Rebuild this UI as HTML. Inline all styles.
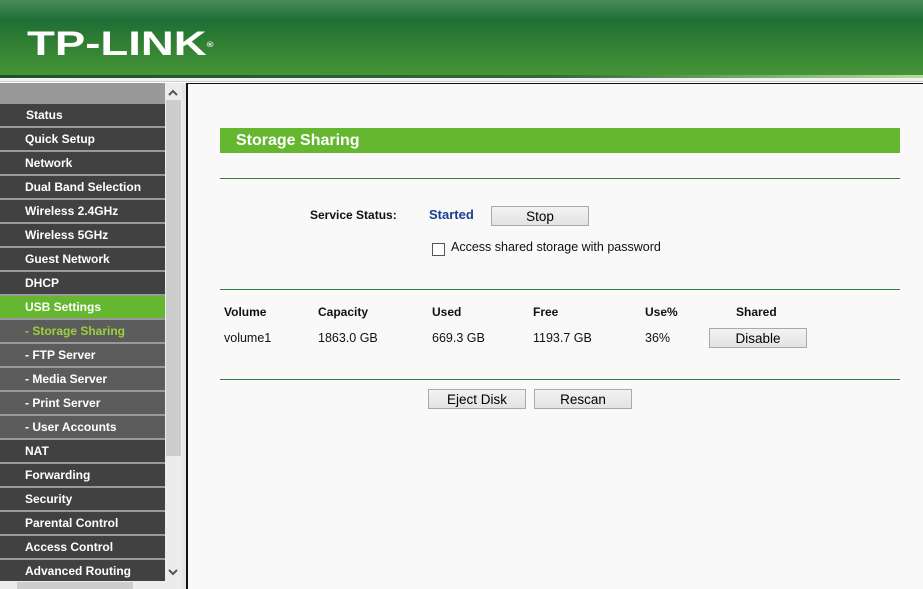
<!DOCTYPE html>
<html><head><meta charset="utf-8"><style>
*{margin:0;padding:0;box-sizing:border-box}
body{width:923px;height:589px;overflow:hidden;background:#fff;font-family:"Liberation Sans",Arial,sans-serif;position:relative}
.hdr{position:absolute;left:0;top:0;width:923px;height:75px;background:linear-gradient(#4a8a5a 0,#1e6e36 20px,#2e7d33 40px,#459436 75px)}
.logo{position:absolute;left:27px;top:24px;color:#fff;font-weight:bold;font-size:34px;letter-spacing:0px;transform:scaleX(1.34);transform-origin:left;line-height:40px}
.logo sup{font-size:7px;vertical-align:top;position:relative;top:2px}
.l1{position:absolute;left:0;top:75px;width:923px;height:3px;background:linear-gradient(90deg,#1f4f2c,#2e6a3a 60%,#b6dc9a)}
.l2{position:absolute;left:0;top:78px;width:923px;height:4px;background:#f0f0f0;border-bottom:1px solid #d0d0d0}
.side{position:absolute;left:0;top:83px;width:165px;height:498px;background:#999;overflow:hidden}
.it{position:absolute;left:0;width:165px;height:22px;background:#414141;color:#fff;font-weight:bold;font-size:12px;line-height:22px;padding-left:25px}
.sub{background:#5c5c5c}
.act{background:#64b72f}
.sel{color:#9ad23c}
.vs{position:absolute;left:165px;top:83px;width:17px;height:498px;background:#ececec}
.thumb{position:absolute;left:166px;top:100px;width:15px;height:356px;background:#cdcdcd}
.hs{position:absolute;left:0;top:581px;width:182px;height:8px;background:#ececec}
.hthumb{position:absolute;left:17px;top:582px;width:116px;height:7px;background:#cdcdcd}
.gap{position:absolute;left:182px;top:83px;width:4px;height:506px;background:#e6e6e6}
.vline{position:absolute;left:186px;top:83px;width:2px;height:506px;background:#111}
.main{position:absolute;left:188px;top:83px;width:735px;height:506px;background:#f9f9f9;border-top:1px solid #111}
.t{position:absolute;font-size:12.5px;color:#111;white-space:nowrap}
.b{font-weight:bold;font-size:12px}
.bar{position:absolute;left:220px;top:128px;width:680px;height:25px;background:#64b72f;color:#fff;font-weight:bold;font-size:16px;line-height:25px;padding-left:16px}
.hl{position:absolute;left:220px;width:680px;height:1px;background:#2e7d46}
.btn{position:absolute;height:20px;background:linear-gradient(#f2f2f2,#e3e3e3);border:1px solid #a9a9a9;font-size:13.5px;text-align:center;line-height:19px;color:#000}
.cb{position:absolute;left:432px;top:243px;width:13px;height:13px;border:1px solid #555;background:#fff}
</style></head><body>
<div class="hdr"><div class="logo">TP-LINK<sup>®</sup></div></div>
<div class="l1"></div><div class="l2"></div>
<div class="side">
<div class="it" style="top:21px;padding-left:26px">Status</div>
<div class="it" style="top:45px">Quick Setup</div>
<div class="it" style="top:69px">Network</div>
<div class="it" style="top:93px">Dual Band Selection</div>
<div class="it" style="top:117px">Wireless 2.4GHz</div>
<div class="it" style="top:141px">Wireless 5GHz</div>
<div class="it" style="top:165px">Guest Network</div>
<div class="it" style="top:189px">DHCP</div>
<div class="it act" style="top:213px">USB Settings</div>
<div class="it sub sel" style="top:237px">- Storage Sharing</div>
<div class="it sub" style="top:261px">- FTP Server</div>
<div class="it sub" style="top:285px">- Media Server</div>
<div class="it sub" style="top:309px">- Print Server</div>
<div class="it sub" style="top:333px">- User Accounts</div>
<div class="it" style="top:357px">NAT</div>
<div class="it" style="top:381px">Forwarding</div>
<div class="it" style="top:405px">Security</div>
<div class="it" style="top:429px">Parental Control</div>
<div class="it" style="top:453px">Access Control</div>
<div class="it" style="top:477px">Advanced Routing</div>
</div>
<div class="vs"></div><div class="thumb"></div>
<svg style="position:absolute;left:168px;top:89px" width="10" height="7"><path d="M1 6 L5 2 L9 6" stroke="#555" stroke-width="2" fill="none"/></svg>
<svg style="position:absolute;left:168px;top:569px" width="10" height="7"><path d="M1 1 L5 5 L9 1" stroke="#555" stroke-width="2" fill="none"/></svg>
<div class="hs"></div><div class="hthumb"></div>
<div class="gap"></div><div class="vline"></div>
<div class="main"></div>
<div class="bar">Storage Sharing</div>
<div class="hl" style="top:178px"></div>
<div class="t b" style="left:310px;top:208px">Service Status:</div>
<div class="t b" style="left:429px;top:207px;color:#1a3d8f;font-size:13px">Started</div>
<div class="btn" style="left:491px;top:206px;width:98px">Stop</div>
<div class="cb"></div>
<div class="t" style="left:451px;top:240px">Access shared storage with password</div>
<div class="hl" style="top:289px"></div>
<div class="t b" style="left:224px;top:305px">Volume</div>
<div class="t b" style="left:318px;top:305px">Capacity</div>
<div class="t b" style="left:432px;top:305px">Used</div>
<div class="t b" style="left:533px;top:305px">Free</div>
<div class="t b" style="left:645px;top:305px">Use%</div>
<div class="t b" style="left:736px;top:305px">Shared</div>
<div class="t" style="left:224px;top:331px">volume1</div>
<div class="t" style="left:318px;top:331px">1863.0 GB</div>
<div class="t" style="left:432px;top:331px">669.3 GB</div>
<div class="t" style="left:533px;top:331px">1193.7 GB</div>
<div class="t" style="left:645px;top:331px">36%</div>
<div class="btn" style="left:709px;top:328px;width:98px">Disable</div>
<div class="hl" style="top:379px"></div>
<div class="btn" style="left:428px;top:389px;width:98px">Eject Disk</div>
<div class="btn" style="left:534px;top:389px;width:98px">Rescan</div>
</body></html>
